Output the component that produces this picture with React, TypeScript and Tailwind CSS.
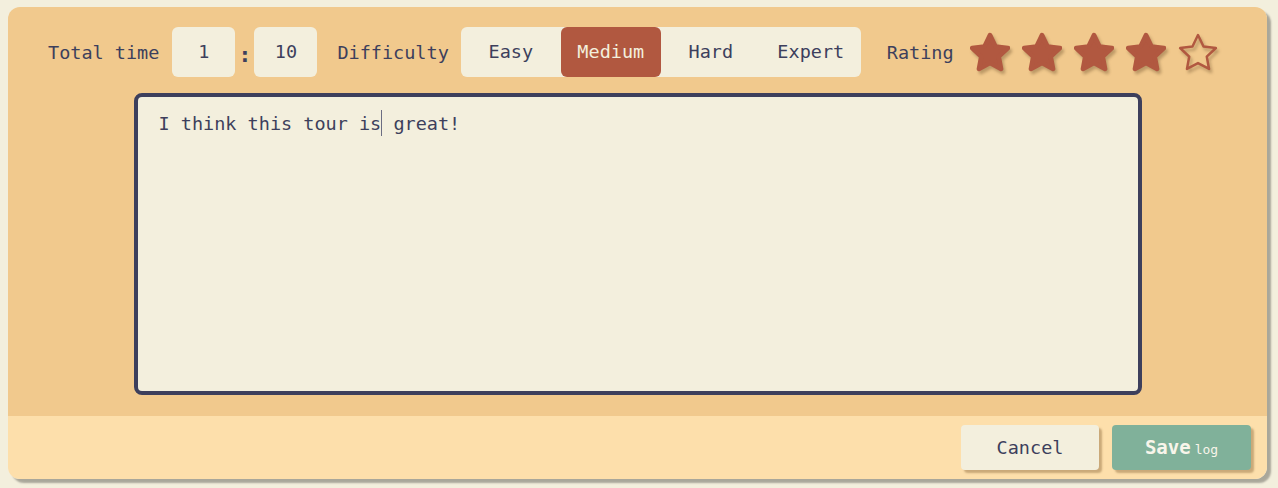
import React from "react";

const mono = "font-['DejaVu_Sans_Mono','Liberation_Mono',monospace]";

function Star({ filled }: { filled: boolean }) {
  return (
    <svg
      width="40"
      height="40"
      viewBox="1.5 1 21 21"
      className="drop-shadow-[2px_3px_1.5px_rgba(90,60,30,0.35)]"
    >
      <path
        d="M12 2.6l2.9 6 6.5.8-4.8 4.5 1.2 6.5L12 17.3l-5.8 3.1 1.2-6.5-4.8-4.5 6.5-.8z"
        fill={filled ? "#b15840" : "none"}
        stroke="#b15840"
        strokeWidth={filled ? 2.4 : 1.3}
        strokeLinejoin="round"
      />
    </svg>
  );
}

export default function App() {
  const levels = ["Easy", "Medium", "Hard", "Expert"];
  return (
    <div className={`min-h-screen bg-[#f3efdd] pt-[7px] pl-2 pr-[11px] ${mono} text-[#3d3f5c]`}>
      {/* carte du journal */}
      <div className="rounded-xl overflow-hidden shadow-[4px_4px_2px_rgba(0,0,0,0.3)]">
        <div className="bg-[#f1c98d] pt-5 pb-[21px]">
          <div className="flex items-center h-[50px] pl-10 text-[18.5px]">
            <span className="mt-px">Total time</span>
            <div className="ml-[13px] w-[63px] h-[50px] rounded-md bg-[#f3efdd] flex items-center justify-center">1</div>
            <span className="w-[19px] text-center font-bold text-[22px] mt-1">:</span>
            <div className="w-[63px] h-[50px] rounded-md bg-[#f3efdd] flex items-center justify-center">10</div>
            <span className="ml-5 mt-px">Difficulty</span>
            <div className="ml-3 flex rounded-md bg-[#f3efdd] h-[50px]">
              {levels.map((l) => (
                <div
                  key={l}
                  className={`w-[100px] flex items-center justify-center rounded-md ${
                    l === "Medium" ? "bg-[#b15840] text-[#f3efdd]" : ""
                  }`}
                >
                  {l}
                </div>
              ))}
            </div>
            <span className="ml-[26px] mt-px">Rating</span>
            <div className="ml-4 flex gap-3">
              {[1, 2, 3, 4, 5].map((n) => (
                <Star key={n} filled={n <= 4} />
              ))}
            </div>
          </div>
          <div className="mt-4 mx-auto w-[1008px] h-[302px] rounded-lg border-4 border-[#3d3f5c] bg-[#f3efdd] pl-[21px] pr-5 pt-[13px] text-[18.5px]">
            I think this tour is<span className="inline-block w-px h-[26px] bg-[#6b6d82] align-middle -mt-1" /> great!
          </div>
        </div>
        <div className="bg-[#fddfab] flex justify-end gap-[13px] pt-[9px] pb-[9px] pr-4">
          <button className="w-[138px] h-[45px] rounded bg-[#f3efdd] shadow-[3px_3px_2px_rgba(140,105,60,0.45)] text-[18.5px]">
            Cancel
          </button>
          <button className="w-[139px] h-[45px] rounded bg-[#80b19a] shadow-[3px_3px_2px_rgba(140,105,60,0.45)] text-[#f8f5ea] flex items-center justify-center gap-1">
            <span className="font-bold text-[19px]">Save</span>
            <span className="text-[13px] mt-1">log</span>
          </button>
        </div>
      </div>
    </div>
  );
}
